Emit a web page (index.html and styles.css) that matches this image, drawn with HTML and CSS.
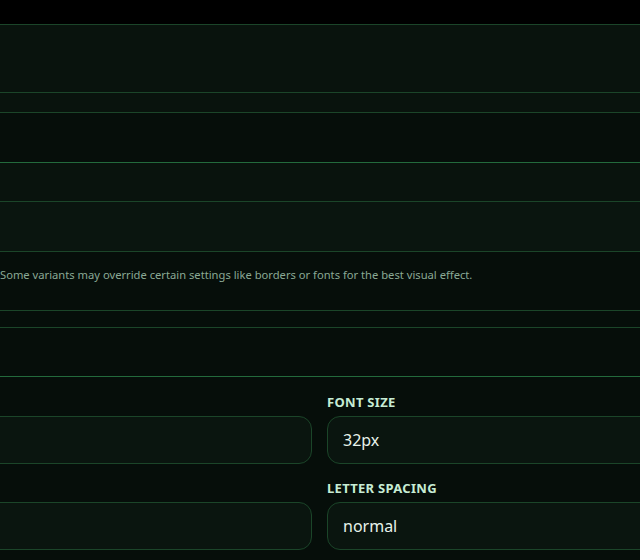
FILE: index.html
```html
<!DOCTYPE html>
<html lang="en">
<head>
    <meta charset="UTF-8">
    <meta name="viewport" content="width=device-width, initial-scale=1.0">
    <title>Theme Settings</title>
    <link rel="stylesheet" href="styles.css">
</head>
<body>

<div class="topbar"></div>

<div class="settings">
    <!-- collapsed groups -->
    <div class="row row-head"></div>
    <div class="row row-sub"></div>
    <div class="row row-plain row-active"></div>
    <div class="row row-thin"></div>
    <div class="row row-tall"></div>

    <div class="row note">
        <p>Some variants may override certain settings like borders or fonts for the best visual effect.</p>
    </div>

    <div class="row row-gap"></div>
    <div class="row row-plain row-active"></div>

    <!-- typography -->
    <div class="fields">
        <div class="field">
            <input type="text" value="">
        </div>
        <div class="field">
            <label>Font size</label>
            <input type="text" value="32px">
        </div>
        <div class="field">
            <input type="text" value="">
        </div>
        <div class="field">
            <label>Letter spacing</label>
            <input type="text" value="normal">
        </div>
    </div>
</div>

</body>
</html>
```

FILE: styles.css
```css
* {
    box-sizing: border-box;
}

body {
    margin: 0;
    background-color: #060e0a;
    font-family: "Noto Sans", "Open Sans", sans-serif;
    overflow: hidden;
    height: 560px;
}

.topbar {
    height: 24px;
    background-color: #000;
}

.settings {
    width: 1100px;
    margin-left: -420px;
    border-top: 1px solid #1b4529;
}

.row {
    border-bottom: 1px solid #1b4529;
}

.row-head {
    height: 68px;
    background-color: #09130d;
}

.row-sub {
    height: 20px;
    background-color: #09130d;
}

.row-plain {
    height: 50px;
    background-color: #060e0a;
}

.row-active {
    border-bottom-color: #236a3c;
}

.row-thin {
    height: 39px;
    background-color: #09130d;
}

.row-tall {
    height: 50px;
    background-color: #0a150f;
}

.note {
    height: 59px;
    padding-top: 15px;
}

.note p {
    margin: 0;
    padding-left: 420px;
    font-size: 11.2px;
    color: #8aa995;
}

.row-gap {
    height: 17px;
}

.row-gap + .row-plain {
    height: 49px;
}

.fields {
    display: grid;
    grid-template-columns: 732px 1fr;
    align-items: end;
    column-gap: 15px;
    row-gap: 15px;
    padding-top: 16px;
}

.field {
    display: flex;
    flex-direction: column;
    gap: 5px;
}

.field label {
    font-size: 13px;
    font-weight: bold;
    text-transform: uppercase;
    letter-spacing: 0.3px;
    color: #c6ecd4;
}

.field input {
    height: 48px;
    padding: 0 15px;
    border: 1px solid #1b4529;
    border-radius: 13px;
    background-color: #0a150f;
    color: #e7f3eb;
    font-family: inherit;
    font-size: 16px;
    outline: none;
}
```
